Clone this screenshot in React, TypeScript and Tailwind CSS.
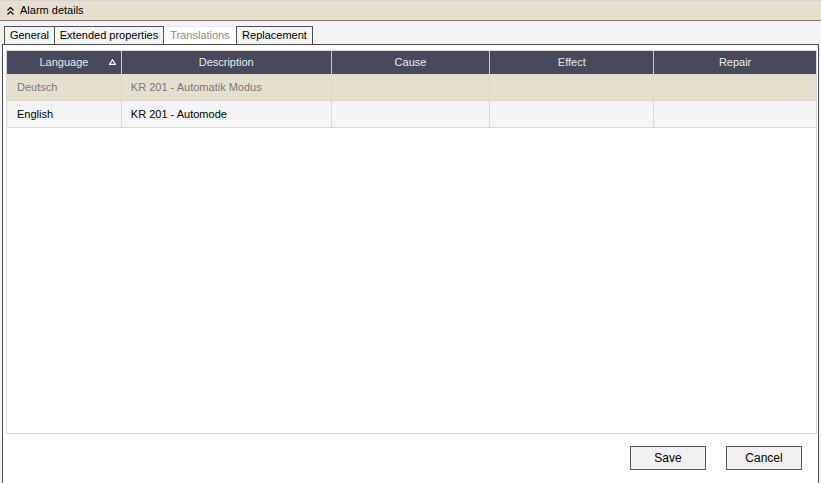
import React from "react";

const cols = [
  { name: "Language", w: 115, sort: true },
  { name: "Description", w: 210 },
  { name: "Cause", w: 159 },
  { name: "Effect", w: 164 },
  { name: "Repair", w: 162 },
];

const rows = [
  { cells: ["Deutsch", "KR 201 - Automatik Modus", "", "", ""], sel: true },
  { cells: ["English", "KR 201 - Automode", "", "", ""], sel: false },
];

export default function App() {
  return (
    <div
      className="w-[821px] h-[483px] bg-[#f4f4f4] flex flex-col overflow-hidden text-[11px] text-black"
      style={{ fontFamily: '"Liberation Sans", Arial, sans-serif' }}
    >
      <div className="h-[1px] bg-[#d6d6d6]" />
      <div className="h-[20px] bg-[#e6dfd0] border-b border-[#7a7a7a] flex items-center pl-[7px]">
        <svg width="7" height="8" viewBox="0 0 7 8" className="mr-[6px]">
          <path d="M0.5 3.5 L3.5 0.5 L6.5 3.5 M0.5 7.5 L3.5 4.5 L6.5 7.5" stroke="#000" strokeWidth="1.2" fill="none" />
        </svg>
        <span>Alarm details</span>
      </div>
      <div className="h-[5px]" />
      <div className="flex pl-[4px] h-[18px] items-end">
        <div className="w-[51px] h-[18px] border border-[#505050] border-b-0 bg-[#f4f4f4] flex items-center justify-center">General</div>
        <div className="w-[109px] h-[18px] border border-[#505050] border-l-0 border-b-0 bg-[#f4f4f4] flex items-center justify-center">Extended properties</div>
        <div className="w-[72px] h-[18px] border-t border-[#e6e6e6] bg-white flex items-center justify-center text-[#8a8a8a]">Translations</div>
        <div className="w-[77px] h-[18px] border border-[#505050] border-b-0 bg-[#f4f4f4] flex items-center justify-center">Replacement</div>
      </div>
      <div className="flex-1 ml-[2px] mr-[2px] border border-[#4a4a52] border-b-0 bg-white flex flex-col pl-[3px] pr-[1px] pt-[5px]">
        <div className="h-[384px] border border-[#d8d8d8] flex flex-col">
          <div className="flex h-[23px] bg-[#484a5b] text-[#e8e8ec]">
            {cols.map((c, i) => (
              <div
                key={c.name}
                className={`relative flex items-center justify-center ${i < cols.length - 1 ? "border-r border-[#c8c8d0]" : ""}`}
                style={{ width: c.w, flexGrow: i === cols.length - 1 ? 1 : 0 }}
              >
                {c.name}
                {c.sort && (
                  <svg width="7" height="6" viewBox="0 0 7 6" className="absolute right-[5px] top-[8px]">
                    <path d="M3.5 0.8 L6.3 5.3 L0.7 5.3 Z" stroke="#fff" strokeWidth="1.2" fill="none" />
                  </svg>
                )}
              </div>
            ))}
          </div>
          {rows.map((r, ri) => (
            <div
              key={ri}
              className={`flex h-[27px] border-b border-[#d8d8d8] ${r.sel ? "bg-[#e6dfd0] text-[#7a7a7a]" : "bg-[#f4f4f4] text-black"}`}
            >
              {r.cells.map((cell, i) => (
                <div
                  key={i}
                  className={`flex items-center ${i === 0 ? "pl-[10px]" : "pl-[9px]"} ${i < cols.length - 1 ? "border-r border-[#d8d8d8]" : ""}`}
                  style={{ width: cols[i].w, flexGrow: i === cols.length - 1 ? 1 : 0 }}
                >
                  {cell}
                </div>
              ))}
            </div>
          ))}
        </div>
        <div className="flex justify-end mt-[12px] pr-[15px] gap-[20px]">
          <button className="w-[76px] h-[24px] border border-[#555555] bg-[#f0f0f0] text-[12px] flex items-center justify-center">Save</button>
          <button className="w-[76px] h-[24px] border border-[#555555] bg-[#f0f0f0] text-[12px] flex items-center justify-center">Cancel</button>
        </div>
      </div>
    </div>
  );
}
